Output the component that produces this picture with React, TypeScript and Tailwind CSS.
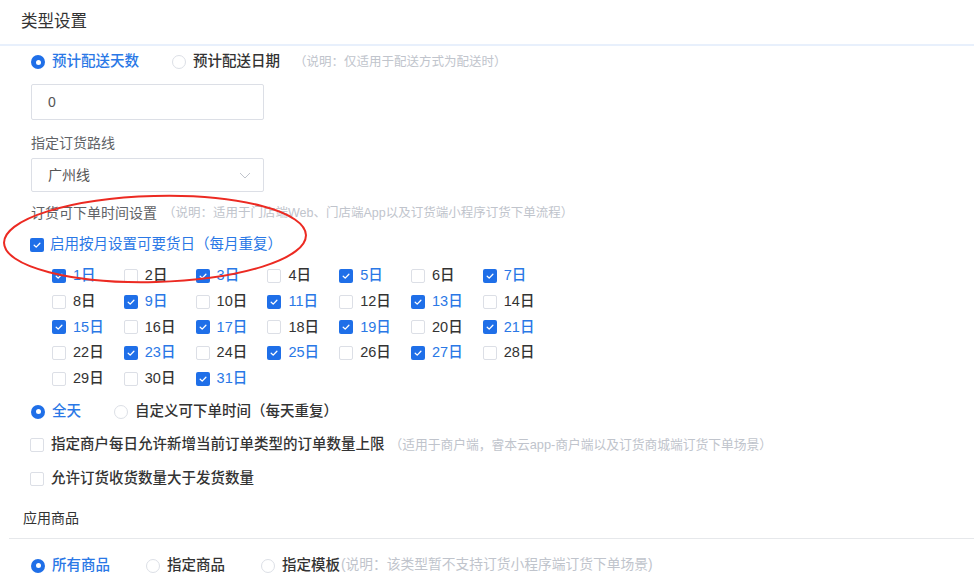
import React from "react";

const BLUE_BG = "bg-[#1f6fe8]";

function Radio({ checked }: { checked?: boolean }) {
  return checked ? (
    <span className={`w-[14px] h-[14px] shrink-0 rounded-full ${BLUE_BG} flex items-center justify-center`}>
      <span className="w-[5px] h-[5px] rounded-full bg-white" />
    </span>
  ) : (
    <span className="w-[14px] h-[14px] shrink-0 rounded-full border border-[#dcdfe6] bg-white" />
  );
}

function Checkbox({ checked }: { checked?: boolean }) {
  return checked ? (
    <span className={`w-[14px] h-[14px] shrink-0 rounded-[2px] ${BLUE_BG} flex items-center justify-center`}>
      <svg width="10" height="10" viewBox="0 0 10 10">
        <path d="M2.2 5.2 L4.2 7.1 L7.9 3.2" fill="none" stroke="white" strokeWidth="1.3" strokeLinecap="round" strokeLinejoin="round" />
      </svg>
    </span>
  ) : (
    <span className="w-[14px] h-[14px] shrink-0 rounded-[2px] border border-[#dcdfe6] bg-white" />
  );
}

function RadioOpt({ checked, label }: { checked?: boolean; label: string }) {
  return (
    <span className="flex items-center gap-[7px]">
      <Radio checked={checked} />
      <span className={`text-[14.5px] font-medium ${checked ? "text-[#2a78e6]" : "text-[#333333]"}`}>{label}</span>
    </span>
  );
}

export default function App() {
  const days = Array.from({ length: 31 }, (_, i) => i + 1);
  return (
    <div className="relative w-[974px] h-[581px] overflow-hidden bg-white font-[Liberation_Sans,Noto_Sans_CJK_SC,sans-serif] text-[#333333]">
      {/* header */}
      <div className="h-[46px] border-b-2 border-[#e8f0fc] flex items-center pl-[21px] pb-[2px]">
        <span className="text-[16.5px] text-[#333333]">类型设置</span>
      </div>

      <div className="pl-[31px]">
        {/* delivery radio row */}
        <div className="mt-[5px] h-[22px] flex items-center">
          <RadioOpt checked label="预计配送天数" />
          <span className="ml-[33px]">
            <RadioOpt label="预计配送日期" />
          </span>
          <span className="ml-[14px] text-[12.5px] text-[#c0c4cc]">（说明：仅适用于配送方式为配送时）</span>
        </div>

        {/* input */}
        <div className="mt-[11px] w-[233px] h-[36px] border border-[#dcdfe6] rounded-[2px] flex items-center pl-[16px] text-[14px] text-[#555555]">
          0
        </div>

        <div className="mt-[13px] h-[20px] flex items-center text-[14px] text-[#606266]">指定订货路线</div>

        {/* select */}
        <div className="mt-[5px] w-[233px] h-[34px] border border-[#dcdfe6] rounded-[2px] flex items-center justify-between pl-[16px] pr-[12px] text-[14px] text-[#555555]">
          <span>广州线</span>
          <svg width="12" height="7" viewBox="0 0 12 7">
            <path d="M1 1 L6 6 L11 1" fill="none" stroke="#c0c4cc" strokeWidth="1" />
          </svg>
        </div>

        <div className="mt-[11px] h-[20px] flex items-center">
          <span className="text-[14px] text-[#606266]">订货可下单时间设置</span>
          <span className="ml-[6px] text-[12.5px] text-[#c0c4cc]">（说明：适用于门店端Web、门店端App以及订货端小程序订货下单流程）</span>
        </div>

        <div className="mt-[12px] h-[20px] flex items-center gap-[6px] -ml-[1px]">
          <Checkbox checked />
          <span className="text-[14.5px] text-[#2a78e6]">启用按月设置可要货日（每月重复）</span>
        </div>

        {/* day grid */}
        <div className="mt-[8px] ml-[21px] grid grid-cols-[repeat(7,71.8px)] auto-rows-[25.75px]">
          {days.map((d) => {
            const on = d % 2 === 1 && d !== 29;
            return (
              <div key={d} className="flex items-center gap-[7px]">
                <Checkbox checked={on} />
                <span className={`text-[14.5px] font-medium ${on ? "text-[#2a78e6]" : "text-[#333333]"}`}>{d}日</span>
              </div>
            );
          })}
        </div>

        <div className="mt-[9px] h-[22px] flex items-center">
          <RadioOpt checked label="全天" />
          <span className="ml-[33px]">
            <RadioOpt label="自定义可下单时间（每天重复）" />
          </span>
        </div>

        <div className="mt-[12px] h-[20px] flex items-center gap-[7px] -ml-[1px]">
          <Checkbox />
          <span className="text-[14.5px] font-medium text-[#333333]">指定商户每日允许新增当前订单类型的订单数量上限</span>
          <span className="-ml-[2px] text-[12.75px] text-[#c0c4cc]">（适用于商户端，睿本云app-商户端以及订货商城端订货下单场景）</span>
        </div>

        <div className="mt-[14px] h-[20px] flex items-center gap-[7px] -ml-[1px]">
          <Checkbox />
          <span className="text-[14.5px] font-medium text-[#333333]">允许订货收货数量大于发货数量</span>
        </div>
      </div>

      {/* 应用商品 */}
      <div className="mt-[20px] h-[20px] flex items-center pl-[23px] text-[14px] text-[#333333]">应用商品</div>
      <div className="mt-[9px] ml-[9px] border-t border-[#e6e8eb]" />
      <div className="mt-[16px] pl-[31px] h-[22px] flex items-center">
        <RadioOpt checked label="所有商品" />
        <span className="ml-[36px]">
          <RadioOpt label="指定商品" />
        </span>
        <span className="ml-[36px]">
          <RadioOpt label="指定模板" />
        </span>
        <span className="ml-[1px] text-[13.75px] text-[#c0c4cc]">(说明：该类型暂不支持订货小程序端订货下单场景)</span>
      </div>

      {/* red annotation ellipse */}
      <svg className="absolute left-0 top-[190px] pointer-events-none" width="320" height="100" viewBox="0 0 320 100">
        <ellipse cx="155" cy="49" rx="151" ry="43" fill="none" stroke="#ec2a22" strokeWidth="2" transform="rotate(-1.5 155 49)" />
      </svg>
    </div>
  );
}
